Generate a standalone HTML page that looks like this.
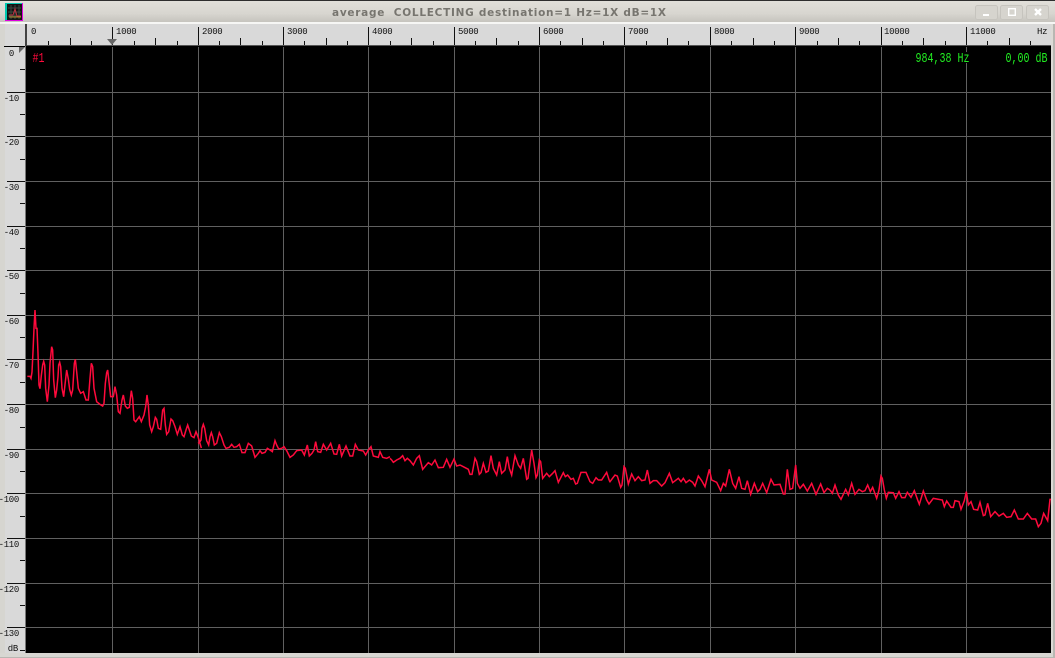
<!DOCTYPE html>
<html>
<head>
<meta charset="utf-8">
<style>
html,body{margin:0;padding:0;background:#d6d5d0;width:1055px;height:658px;overflow:hidden}
svg{display:block}
.t{font-family:"Liberation Mono",monospace;font-size:9px;fill:#111;letter-spacing:-.3px}
.tr{text-anchor:end}
.g{font-family:"Liberation Mono",monospace;font-size:10px;fill:#22ee22}
.tr2{fill:none;stroke:#ff0a3c;stroke-width:1.5;vector-effect:non-scaling-stroke;stroke-linejoin:miter}
</style>
</head>
<body>
<svg width="1055" height="658" viewBox="0 0 1055 658" xmlns="http://www.w3.org/2000/svg">
<defs>
<linearGradient id="tb" x1="0" y1="0" x2="0" y2="1">
<stop offset="0" stop-color="#e2e0da"/><stop offset=".6" stop-color="#d8d6d0"/><stop offset="1" stop-color="#c6c4be"/>
</linearGradient>
</defs>
<rect width="1055" height="658" fill="#d6d5d0"/>
<rect y="0" width="1055" height="22" fill="url(#tb)"/>
<rect y="0" width="1055" height="1" fill="#2e2e2e"/>
<rect y="22" width="1055" height="2" fill="#f6f6f4"/>
<rect x="1051" y="24" width="2" height="634" fill="#dcdbd6"/>
<rect x="1053" y="24" width="2" height="634" fill="#b8b7b2"/>
<rect y="653" width="1053" height="4" fill="#d8d7d2"/>
<rect y="657" width="1055" height="1" fill="#b8b7b2"/>

<!-- app icon -->
<rect x="5" y="3" width="18" height="18" fill="#e000e0"/>
<path d="M5 3h17v1H7v16H5z" fill="#00c8b0"/>
<rect x="7" y="4" width="15" height="16" fill="#141414"/>
<path d="M8 8h13M8 12h13M8 16h13M11 5v14M15 5v14M19 5v14" stroke="#3a4a40" stroke-width="1" fill="none"/>
<path d="M9 15h4l2-6 2 7h4" stroke="#c03040" stroke-width="1" fill="none"/>
<path d="M9 17h12" stroke="#b09030" stroke-width="1" fill="none"/>

<!-- title -->
<text x="332" y="16" font-family="'DejaVu Sans',sans-serif" font-weight="bold" font-size="10.5" fill="#77756f" textLength="334" lengthAdjust="spacing" xml:space="preserve">average  COLLECTING destination=1 Hz=1X dB=1X</text>

<!-- window buttons -->
<g fill="#d6d4ce" stroke="#c6c4be" stroke-width="1">
<rect x="975.5" y="5.5" width="22" height="14" rx="2"/>
<rect x="1000.5" y="5.5" width="22" height="14" rx="2"/>
<rect x="1026.5" y="5.5" width="22" height="14" rx="2"/>
</g>
<rect x="983" y="14" width="6" height="2" fill="#fff"/>
<rect x="1008.7" y="8.7" width="6.6" height="6.6" fill="none" stroke="#fff" stroke-width="1.4"/>
<path d="M1035 9l6 6M1041 9l-6 6" stroke="#fff" stroke-width="2.4" fill="none"/>

<!-- rulers -->
<rect x="5" y="24" width="1046" height="22" fill="#d9d9d9"/>
<rect x="5" y="46" width="21" height="607" fill="#d9d9d9"/>
<rect x="26" y="46" width="1025" height="607" fill="#000"/>
<rect x="4" y="46" width="22" height="1" fill="#000"/>
<rect x="27" y="45" width="1024" height="1" fill="#555"/>
<rect x="25" y="24" width="2" height="22" fill="#444"/>
<rect x="25" y="46" width="1" height="607" fill="#777"/>

<!-- grid -->
<path stroke="#606060" stroke-width="1" fill="none" d="M112.5 47V653M198.5 47V653M283.5 47V653M368.5 47V653M454.5 47V653M539.5 47V653M624.5 47V653M710.5 47V653M795.5 47V653M881.5 47V653M966.5 47V653M26 92.5H1051M26 136.5H1051M26 181.5H1051M26 226.5H1051M26 270.5H1051M26 315.5H1051M26 359.5H1051M26 404.5H1051M26 449.5H1051M26 493.5H1051M26 538.5H1051M26 583.5H1051M26 627.5H1051"/>

<!-- top ticks -->
<path stroke="#111" stroke-width="1" fill="none" d="M112.5 27V45M198.5 27V45M283.5 27V45M368.5 27V45M454.5 27V45M539.5 27V45M624.5 27V45M710.5 27V45M795.5 27V45M881.5 27V45M966.5 27V45
M70.5 38V45M155.5 38V45M240.5 38V45M326.5 38V45M411.5 38V45M496.5 38V45M582.5 38V45M667.5 38V45M753.5 38V45M838.5 38V45M923.5 38V45M1009.5 38V45
M48.5 41V45M91.5 41V45M134.5 41V45M177.5 41V45M219.5 41V45M262.5 41V45M304.5 41V45M347.5 41V45M390.5 41V45M433.5 41V45M475.5 41V45M518.5 41V45M560.5 41V45M603.5 41V45M646.5 41V45M688.5 41V45M731.5 41V45M774.5 41V45M817.5 41V45M859.5 41V45M902.5 41V45M945.5 41V45M987.5 41V45M1030.5 41V45"/>
<path d="M107 39h10l-5 6z" fill="#666"/>

<g class="t">
<text x="31" y="34">0</text><text x="116" y="34">1000</text><text x="202" y="34">2000</text><text x="287" y="34">3000</text><text x="372" y="34">4000</text><text x="458" y="34">5000</text><text x="543" y="34">6000</text><text x="628" y="34">7000</text><text x="714" y="34">8000</text><text x="799" y="34">9000</text><text x="884" y="34">10000</text><text x="970" y="34">11000</text><text x="1037" y="34">Hz</text>
</g>

<!-- left ticks -->
<path stroke="#111" stroke-width="1" fill="none" d="M7 92.5H25M7 136.5H25M7 181.5H25M7 226.5H25M7 270.5H25M7 315.5H25M7 359.5H25M7 404.5H25M7 449.5H25M7 493.5H25M7 538.5H25M7 583.5H25M7 627.5H25
M20 69.5H25M20 114.5H25M20 159.5H25M20 203.5H25M20 248.5H25M20 293.5H25M20 337.5H25M20 382.5H25M20 427.5H25M20 471.5H25M20 516.5H25M20 560.5H25M20 605.5H25M20 650.5H25"/>
<path d="M19 47h6l-6 6z" fill="#666"/>
<g class="t tr">
<text x="14" y="56">0</text><text x="19" y="101">-10</text><text x="19" y="145">-20</text><text x="19" y="190">-30</text><text x="19" y="235">-40</text><text x="19" y="279">-50</text><text x="19" y="324">-60</text><text x="19" y="368">-70</text><text x="19" y="413">-80</text><text x="19" y="458">-90</text><text x="19" y="502">-100</text><text x="19" y="547">-110</text><text x="19" y="592">-120</text><text x="19" y="636">-130</text><text x="18" y="651">dB</text>
</g>

<!-- readouts -->
<rect x="912" y="52" width="60" height="11" fill="#000"/>
<text class="g" transform="translate(915.5,62) scale(1,1.4)">984,38 Hz</text>
<text class="g" transform="translate(1005.5,62) scale(1,1.4)">0,00 dB</text>
<text class="g" style="fill:#ff0a3c" transform="translate(32.5,62) scale(1,1.4)">#1</text>

<!-- trace -->
<g transform="translate(20,300) scale(.33333)"><polyline class="tr2" points="22,229 30,229 33,235 36,216 39,155 42,85 45,30 48,85 51,85 54,160 57,255 60,266 64,226 68,195 71,184 74,195 77,265 82,305 87,255 90,190 95,140 98,150 101,240 106,293 110,270 114,230 116,195 119,187 122,200 126,265 131,290 136,245 140,210 145,237 149,268 154,285 158,270 163,190 166,178 170,215 175,265 182,280 190,275 198,300 205,300 210,235 214,190 218,200 222,265 230,305 240,313 248,318 252,310 256,250 260,218 263,210 267,245 272,290 280,290 285,260 290,285 295,335 300,340 306,300 310,285 316,318 322,325 328,322 334,272 338,295 342,360 347,365 358,350 364,365 372,345 377,320 381,285 385,315 389,375 395,395 400,380 406,352 410,358 415,385 422,388 428,330 432,325 436,375 440,403 446,395 453,357 458,362 465,380 472,403 480,380 487,405 492,410 498,390 503,375 508,390 514,408 522,413 528,395 534,410 544,444"/></g>
<g transform="translate(190,420) scale(.33333)"><polyline class="tr2" points="24,70 28,68 33,60 36,25 40,13 44,25 50,62 56,75 60,50 64,38 68,50 73,75 80,70 88,38 94,50 102,75 108,85 118,82 125,73 132,82 140,80 148,73 156,98 165,98 175,70 185,78 195,112 205,100 210,92 216,100 225,97 232,85 240,90 247,95 255,62 260,75 266,87 275,85 282,80 290,92 300,112 310,105 320,92 335,90 343,105 352,75 358,108 366,100 372,90 377,65 383,95 392,97 400,73 410,90 422,70 432,102 440,103 448,73 455,108 468,78 480,108 488,108 496,73 505,90 520,93 527,105 535,90 543,80 550,108 565,112 570,95 578,112 590,115 600,110"/></g>
<g transform="translate(380,430) scale(.33333)"><polyline class="tr2" points="30,85 35,90 40,97 50,90 60,85 68,77 75,92 82,85 90,92 100,105 110,85 118,77 128,118 145,98 155,105 165,90 175,113 190,112 200,88 210,112 222,87 230,108 240,105 250,110 265,118 270,133 276,133 285,85 290,95 298,133 303,128 310,100 318,127 325,123 333,77 340,115 350,135 358,95 365,130 375,120 382,80 388,115 395,135 405,77 415,105 422,115 430,85 440,148 444,145 455,60 462,100 468,143 472,135 478,90 482,95 488,145 500,130 508,140 518,130 525,122 535,157 550,128 556,140 563,135 573,148 580,145 587,162 592,160 603,127 618,127 630,155 638,160 648,143 655,150 665,150 680,127 688,152"/></g>
<g transform="translate(600,450) scale(.33333)"><polyline class="tr2" points="28,92 30,95 45,75 52,78 62,112 66,105 72,50 76,55 85,102 95,72 105,92 115,80 125,92 135,90 142,60 150,100 160,92 170,92 185,108 195,98 208,70 218,98 235,85 243,95 250,85 258,98 268,90 278,97 285,108 295,78 305,92 315,110 328,58 335,90 350,97 362,122 370,100 377,108 388,58 398,100 407,115 417,80 425,115 435,118 442,92 452,133 463,100 473,125 480,118 488,100 500,128 513,88 522,105 540,103 550,132 555,132 562,58 570,118 578,115 587,45 592,100 600,115 610,103 622,123 635,100 648,133 662,102 672,128 682,115 690,120"/></g>
<g transform="translate(825,460) scale(.33333)"><polyline class="tr2" points="15,90 22,100 30,75 40,105 48,118 62,88 70,105 80,70 90,103 102,88 112,95 120,92 128,75 136,95 143,82 155,115 162,90 168,48 172,55 178,90 184,115 190,97 205,98 212,115 222,95 230,113 240,113 247,97 258,112 268,92 278,120 283,133 295,93 305,120 312,132 325,115 352,120 358,140 365,123 378,142 385,142 390,122 402,125 408,148 418,122 424,95 430,135 438,125 446,148 458,150 465,127 475,167 480,165 488,130 497,170 510,155 522,168 535,160 545,172 558,170 568,150 580,177 595,177 607,160 620,177 632,177 640,200 648,190 656,160 668,182 675,118 678,118"/></g>
</svg>
</body>
</html>
